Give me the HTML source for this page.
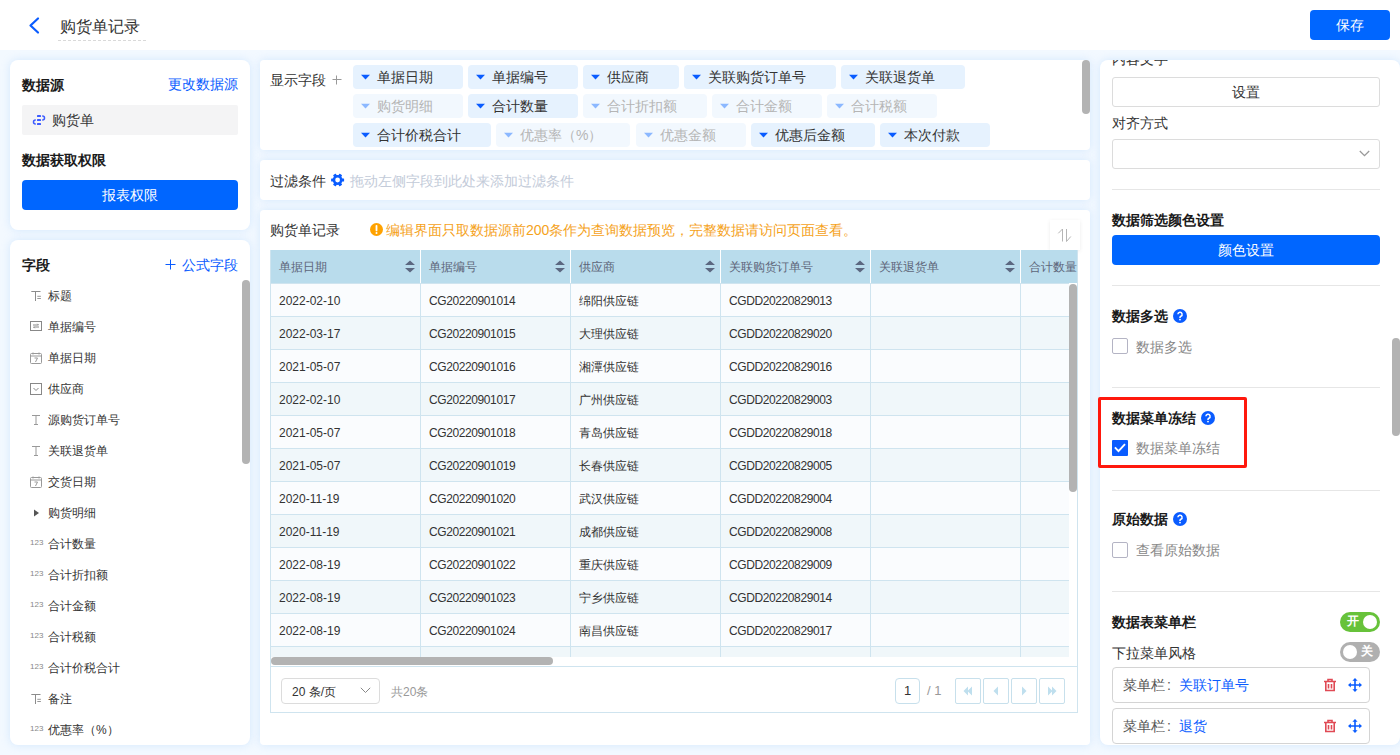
<!DOCTYPE html>
<html><head><meta charset="utf-8">
<style>
*{box-sizing:border-box;margin:0;padding:0}
html,body{width:1400px;height:755px;overflow:hidden}
body{position:relative;font-family:"Liberation Sans",sans-serif;font-size:14px;color:#333;background:#f3f9ff}
.a{position:absolute;white-space:nowrap}
.card{position:absolute;background:#fff;border-radius:8px;box-shadow:0 0 8px rgba(200,225,252,.75)}
.t14{font-size:14px;line-height:20px;height:20px}
.b{font-weight:bold;color:#1a1a1a}
.blue{color:#0a5cff}
.sb{position:absolute;background:#b3b3b3;border-radius:4px;width:8px}
</style></head><body>
<!-- HEADER -->
<div class="a" style="left:0;top:0;width:1400px;height:50px;background:#fff"></div>
<svg class="a" style="left:27px;top:16px" width="14" height="19" viewBox="0 0 14 19"><path d="M11 2.5 L3.5 9.5 L11 16.5" fill="none" stroke="#0a5cff" stroke-width="2.2" stroke-linecap="round" stroke-linejoin="round"/></svg>
<div class="a" style="left:60px;top:16px;font-size:16px;line-height:22px;color:#333">购货单记录</div>
<div class="a" style="left:58px;top:40px;width:88px;height:0;border-top:1px dashed #d9d9d9"></div>
<div class="a" style="left:1310px;top:10px;width:80px;height:30px;background:#0066ff;border-radius:4px;color:#fff;text-align:center;line-height:30px;font-size:14px">保存</div>

<!-- LEFT CARD 1 -->
<div class="card" style="left:10px;top:60px;width:240px;height:170px"></div>
<div class="a b" style="left:22px;top:75px;font-size:14px;line-height:20px">数据源</div>
<div class="a blue" style="left:168px;top:74px;font-size:14px;line-height:20px">更改数据源</div>
<div class="a" style="left:22px;top:105px;width:216px;height:30px;background:#f4f4f5;border-radius:2px"></div>
<svg class="a" style="left:32px;top:113px" width="14" height="14" viewBox="0 0 14 14"><g fill="#3d5cff"><rect x="5" y="2" width="4" height="2" rx=".6"/><rect x="5" y="6" width="4" height="2" rx=".6"/><rect x="5" y="10" width="4" height="2" rx=".6"/></g><g fill="none" stroke="#3d5cff" stroke-width="1.5"><path d="M10.2 3h.3a2 2 0 0 1 0 4h-.3"/><path d="M3.8 7h-.3a2 2 0 0 0 0 4h.3"/></g></svg>
<div class="a" style="left:52px;top:110px;font-size:14px;line-height:20px;color:#333">购货单</div>
<div class="a b" style="left:22px;top:150px;font-size:14px;line-height:20px">数据获取权限</div>
<div class="a" style="left:22px;top:180px;width:216px;height:30px;background:#0066ff;border-radius:4px;color:#fff;text-align:center;line-height:30px;font-size:14px">报表权限</div>

<!-- LEFT CARD 2 -->
<div class="card" style="left:10px;top:240px;width:240px;height:505px"></div>
<div class="a b" style="left:22px;top:255px;font-size:14px;line-height:20px">字段</div>
<svg class="a" style="left:165px;top:259px" width="11" height="11" viewBox="0 0 11 11"><path d="M5.5 0.5v10M0.5 5.5h10" stroke="#0a5cff" stroke-width="1"/></svg>
<div class="a blue" style="left:182px;top:255px;font-size:14px;line-height:20px">公式字段</div>
<div class="sb" style="left:242px;top:280px;height:184px"></div>
<svg class="a" style="left:30px;top:290px" width="12" height="12" viewBox="0 0 12 12"><g stroke="#8c8c8c" stroke-width="1" fill="none"><path d="M1.3 1.5h9.2M5.5 1.5v9.5"/><path d="M7.3 6.3h3.6M7.3 8.5h3.6" stroke-width=".9"/></g></svg>
<div class="a" style="left:48px;top:287px;font-size:12px;line-height:18px;color:#333">标题</div>
<svg class="a" style="left:30px;top:321px" width="12" height="12" viewBox="0 0 12 12"><g stroke="#888" stroke-width="1" fill="none"><rect x="0.5" y="0.5" width="11" height="9"/><path d="M3 4h5.5l-1.2-1.2M9 6H3.5l1.2 1.2"/></g></svg>
<div class="a" style="left:48px;top:318px;font-size:12px;line-height:18px;color:#333">单据编号</div>
<svg class="a" style="left:30px;top:352px" width="12" height="12" viewBox="0 0 12 12"><g stroke="#999" stroke-width="1" fill="none"><rect x="0.5" y="1.5" width="11" height="10" rx="1"/><path d="M0.5 4h11M3 0.5v2M9 0.5v2M4.5 6h3l-2 4"/></g></svg>
<div class="a" style="left:48px;top:349px;font-size:12px;line-height:18px;color:#333">单据日期</div>
<svg class="a" style="left:30px;top:383px" width="12" height="12" viewBox="0 0 12 12"><g stroke="#888" stroke-width="1" fill="none"><rect x="0.5" y="0.5" width="11" height="11"/><path d="M3.5 5l2.5 2.5L8.5 5"/></g></svg>
<div class="a" style="left:48px;top:380px;font-size:12px;line-height:18px;color:#333">供应商</div>
<svg class="a" style="left:30px;top:414px" width="12" height="12" viewBox="0 0 12 12"><g stroke="#999" stroke-width="1" fill="none"><path d="M2 1.5h8M6 1.5v9M4 10.5h4"/></g></svg>
<div class="a" style="left:48px;top:411px;font-size:12px;line-height:18px;color:#333">源购货订单号</div>
<svg class="a" style="left:30px;top:445px" width="12" height="12" viewBox="0 0 12 12"><g stroke="#999" stroke-width="1" fill="none"><path d="M2 1.5h8M6 1.5v9M4 10.5h4"/></g></svg>
<div class="a" style="left:48px;top:442px;font-size:12px;line-height:18px;color:#333">关联退货单</div>
<svg class="a" style="left:30px;top:476px" width="12" height="12" viewBox="0 0 12 12"><g stroke="#999" stroke-width="1" fill="none"><rect x="0.5" y="1.5" width="11" height="10" rx="1"/><path d="M0.5 4h11M3 0.5v2M9 0.5v2M4.5 6h3l-2 4"/></g></svg>
<div class="a" style="left:48px;top:473px;font-size:12px;line-height:18px;color:#333">交货日期</div>
<svg class="a" style="left:30px;top:507px" width="12" height="12" viewBox="0 0 12 12"><path d="M4 2.5l5 3.5-5 3.5z" fill="#555"/></svg>
<div class="a" style="left:48px;top:504px;font-size:12px;line-height:18px;color:#333">购货明细</div>
<div class="a" style="left:30px;top:537px;font-size:8px;line-height:12px;color:#888;letter-spacing:0">123</div>
<div class="a" style="left:48px;top:535px;font-size:12px;line-height:18px;color:#333">合计数量</div>
<div class="a" style="left:30px;top:568px;font-size:8px;line-height:12px;color:#888;letter-spacing:0">123</div>
<div class="a" style="left:48px;top:566px;font-size:12px;line-height:18px;color:#333">合计折扣额</div>
<div class="a" style="left:30px;top:599px;font-size:8px;line-height:12px;color:#888;letter-spacing:0">123</div>
<div class="a" style="left:48px;top:597px;font-size:12px;line-height:18px;color:#333">合计金额</div>
<div class="a" style="left:30px;top:630px;font-size:8px;line-height:12px;color:#888;letter-spacing:0">123</div>
<div class="a" style="left:48px;top:628px;font-size:12px;line-height:18px;color:#333">合计税额</div>
<div class="a" style="left:30px;top:661px;font-size:8px;line-height:12px;color:#888;letter-spacing:0">123</div>
<div class="a" style="left:48px;top:659px;font-size:12px;line-height:18px;color:#333">合计价税合计</div>
<svg class="a" style="left:30px;top:693px" width="12" height="12" viewBox="0 0 12 12"><g stroke="#8c8c8c" stroke-width="1" fill="none"><path d="M1.3 1.5h9.2M5.5 1.5v9.5"/><path d="M7.3 6.3h3.6M7.3 8.5h3.6" stroke-width=".9"/></g></svg>
<div class="a" style="left:48px;top:690px;font-size:12px;line-height:18px;color:#333">备注</div>
<div class="a" style="left:30px;top:723px;font-size:8px;line-height:12px;color:#888;letter-spacing:0">123</div>
<div class="a" style="left:48px;top:721px;font-size:12px;line-height:18px;color:#333">优惠率（%）</div>

<!-- MIDDLE CARD 1 -->
<div class="card" style="left:260px;top:60px;width:830px;height:90px;border-radius:4px"></div>
<div class="a" style="left:270px;top:70px;font-size:14px;line-height:20px;color:#333">显示字段</div>
<svg class="a" style="left:332px;top:75px" width="10" height="10" viewBox="0 0 10 10"><path d="M4.5 0.5v9M0.5 4.5h9" stroke="#999" stroke-width="1"/></svg>
<div class="sb" style="left:1082px;top:60px;height:54px"></div>
<div class="a" style="left:353px;top:65px;width:110px;height:24px;background:#e6f2fe;border-radius:4px"></div><svg class="a" style="left:361px;top:74px" width="9" height="6" viewBox="0 0 9 6"><path d="M0 0.8H9L4.5 5.6z" fill="#0a5cff"/></svg><div class="a" style="left:377px;top:67px;font-size:14px;line-height:20px;color:#333">单据日期</div>
<div class="a" style="left:468px;top:65px;width:110px;height:24px;background:#e6f2fe;border-radius:4px"></div><svg class="a" style="left:476px;top:74px" width="9" height="6" viewBox="0 0 9 6"><path d="M0 0.8H9L4.5 5.6z" fill="#0a5cff"/></svg><div class="a" style="left:492px;top:67px;font-size:14px;line-height:20px;color:#333">单据编号</div>
<div class="a" style="left:583px;top:65px;width:96px;height:24px;background:#e6f2fe;border-radius:4px"></div><svg class="a" style="left:591px;top:74px" width="9" height="6" viewBox="0 0 9 6"><path d="M0 0.8H9L4.5 5.6z" fill="#0a5cff"/></svg><div class="a" style="left:607px;top:67px;font-size:14px;line-height:20px;color:#333">供应商</div>
<div class="a" style="left:684px;top:65px;width:152px;height:24px;background:#e6f2fe;border-radius:4px"></div><svg class="a" style="left:692px;top:74px" width="9" height="6" viewBox="0 0 9 6"><path d="M0 0.8H9L4.5 5.6z" fill="#0a5cff"/></svg><div class="a" style="left:708px;top:67px;font-size:14px;line-height:20px;color:#333">关联购货订单号</div>
<div class="a" style="left:841px;top:65px;width:124px;height:24px;background:#e6f2fe;border-radius:4px"></div><svg class="a" style="left:849px;top:74px" width="9" height="6" viewBox="0 0 9 6"><path d="M0 0.8H9L4.5 5.6z" fill="#0a5cff"/></svg><div class="a" style="left:865px;top:67px;font-size:14px;line-height:20px;color:#333">关联退货单</div>
<div class="a" style="left:353px;top:94px;width:110px;height:24px;background:#f2f8fe;border-radius:4px"></div><svg class="a" style="left:361px;top:103px" width="9" height="6" viewBox="0 0 9 6"><path d="M0 0.8H9L4.5 5.6z" fill="#8cb8ff"/></svg><div class="a" style="left:377px;top:96px;font-size:14px;line-height:20px;color:#b5b5b5">购货明细</div>
<div class="a" style="left:468px;top:94px;width:110px;height:24px;background:#e6f2fe;border-radius:4px"></div><svg class="a" style="left:476px;top:103px" width="9" height="6" viewBox="0 0 9 6"><path d="M0 0.8H9L4.5 5.6z" fill="#0a5cff"/></svg><div class="a" style="left:492px;top:96px;font-size:14px;line-height:20px;color:#333">合计数量</div>
<div class="a" style="left:583px;top:94px;width:124px;height:24px;background:#f2f8fe;border-radius:4px"></div><svg class="a" style="left:591px;top:103px" width="9" height="6" viewBox="0 0 9 6"><path d="M0 0.8H9L4.5 5.6z" fill="#8cb8ff"/></svg><div class="a" style="left:607px;top:96px;font-size:14px;line-height:20px;color:#b5b5b5">合计折扣额</div>
<div class="a" style="left:712px;top:94px;width:110px;height:24px;background:#f2f8fe;border-radius:4px"></div><svg class="a" style="left:720px;top:103px" width="9" height="6" viewBox="0 0 9 6"><path d="M0 0.8H9L4.5 5.6z" fill="#8cb8ff"/></svg><div class="a" style="left:736px;top:96px;font-size:14px;line-height:20px;color:#b5b5b5">合计金额</div>
<div class="a" style="left:827px;top:94px;width:110px;height:24px;background:#f2f8fe;border-radius:4px"></div><svg class="a" style="left:835px;top:103px" width="9" height="6" viewBox="0 0 9 6"><path d="M0 0.8H9L4.5 5.6z" fill="#8cb8ff"/></svg><div class="a" style="left:851px;top:96px;font-size:14px;line-height:20px;color:#b5b5b5">合计税额</div>
<div class="a" style="left:353px;top:123px;width:138px;height:24px;background:#e6f2fe;border-radius:4px"></div><svg class="a" style="left:361px;top:132px" width="9" height="6" viewBox="0 0 9 6"><path d="M0 0.8H9L4.5 5.6z" fill="#0a5cff"/></svg><div class="a" style="left:377px;top:125px;font-size:14px;line-height:20px;color:#333">合计价税合计</div>
<div class="a" style="left:496px;top:123px;width:134px;height:24px;background:#f2f8fe;border-radius:4px"></div><svg class="a" style="left:504px;top:132px" width="9" height="6" viewBox="0 0 9 6"><path d="M0 0.8H9L4.5 5.6z" fill="#8cb8ff"/></svg><div class="a" style="left:520px;top:125px;font-size:14px;line-height:20px;color:#b5b5b5">优惠率（%）</div>
<div class="a" style="left:636px;top:123px;width:110px;height:24px;background:#f2f8fe;border-radius:4px"></div><svg class="a" style="left:644px;top:132px" width="9" height="6" viewBox="0 0 9 6"><path d="M0 0.8H9L4.5 5.6z" fill="#8cb8ff"/></svg><div class="a" style="left:660px;top:125px;font-size:14px;line-height:20px;color:#b5b5b5">优惠金额</div>
<div class="a" style="left:751px;top:123px;width:124px;height:24px;background:#e6f2fe;border-radius:4px"></div><svg class="a" style="left:759px;top:132px" width="9" height="6" viewBox="0 0 9 6"><path d="M0 0.8H9L4.5 5.6z" fill="#0a5cff"/></svg><div class="a" style="left:775px;top:125px;font-size:14px;line-height:20px;color:#333">优惠后金额</div>
<div class="a" style="left:880px;top:123px;width:110px;height:24px;background:#e6f2fe;border-radius:4px"></div><svg class="a" style="left:888px;top:132px" width="9" height="6" viewBox="0 0 9 6"><path d="M0 0.8H9L4.5 5.6z" fill="#0a5cff"/></svg><div class="a" style="left:904px;top:125px;font-size:14px;line-height:20px;color:#333">本次付款</div>

<!-- MIDDLE CARD 2 -->
<div class="card" style="left:260px;top:160px;width:830px;height:40px;border-radius:4px"></div>
<div class="a" style="left:270px;top:171px;font-size:14px;line-height:20px;color:#333">过滤条件</div>
<svg class="a" style="left:331px;top:173px" width="14" height="14" viewBox="0 0 14 14"><g fill="#0a5cff" transform="translate(6.6 7)"><circle r="4.9"/><rect x="-6.5" y="-1.6" width="13" height="3.2" rx=".5"/><rect x="-6.5" y="-1.6" width="13" height="3.2" rx=".5" transform="rotate(60)"/><rect x="-6.5" y="-1.6" width="13" height="3.2" rx=".5" transform="rotate(120)"/></g><circle cx="6.6" cy="7" r="2.4" fill="#fff"/></svg>
<div class="a" style="left:350px;top:171px;font-size:14px;line-height:20px;color:#c3cbd9">拖动左侧字段到此处来添加过滤条件</div>

<!-- MIDDLE CARD 3 -->
<div class="card" style="left:260px;top:210px;width:830px;height:535px;border-radius:4px"></div>
<div class="a" style="left:270px;top:220px;font-size:14px;line-height:20px;color:#333">购货单记录</div>
<svg class="a" style="left:370px;top:223px" width="13" height="13" viewBox="0 0 13 13"><circle cx="6.5" cy="6.5" r="6.5" fill="#ffa200"/><path d="M6.5 2.8v4.6" stroke="#fff" stroke-width="1.8" stroke-linecap="round"/><circle cx="6.5" cy="9.9" r="1" fill="#fff"/></svg>
<div class="a" style="left:386px;top:220px;font-size:14px;line-height:20px;color:#f5a21b">编辑界面只取数据源前200条作为查询数据预览，完整数据请访问页面查看。</div>
<div class="a" style="left:1050px;top:220px;width:30px;height:30px;background:#fff;box-shadow:0 1px 4px rgba(0,0,0,.08)"></div>
<svg class="a" style="left:1057px;top:228px" width="16" height="16" viewBox="0 0 16 16"><g fill="none" stroke="#b5b5b5" stroke-width="1"><path d="M5.5 13.5V1L1.3 5.3"/><path d="M9.5 1v12.5L13.8 8.5"/></g></svg>
<!-- TABLE -->
<div class="a" style="left:270px;top:250px;width:807px;height:33px;background:#b9dcec"></div>
<div class="a" style="left:279px;top:258px;font-size:12px;line-height:18px;color:#5d6579">单据日期</div><svg class="a" style="left:405px;top:260px" width="10" height="13" viewBox="0 0 10 13"><path d="M5 0.4L10 5H0z M0 8H10L5 12.4z" fill="#5c6880"/></svg>
<div class="a" style="left:420px;top:250px;width:1px;height:33px;background:#fff"></div><div class="a" style="left:429px;top:258px;font-size:12px;line-height:18px;color:#5d6579">单据编号</div><svg class="a" style="left:555px;top:260px" width="10" height="13" viewBox="0 0 10 13"><path d="M5 0.4L10 5H0z M0 8H10L5 12.4z" fill="#5c6880"/></svg>
<div class="a" style="left:570px;top:250px;width:1px;height:33px;background:#fff"></div><div class="a" style="left:579px;top:258px;font-size:12px;line-height:18px;color:#5d6579">供应商</div><svg class="a" style="left:705px;top:260px" width="10" height="13" viewBox="0 0 10 13"><path d="M5 0.4L10 5H0z M0 8H10L5 12.4z" fill="#5c6880"/></svg>
<div class="a" style="left:720px;top:250px;width:1px;height:33px;background:#fff"></div><div class="a" style="left:729px;top:258px;font-size:12px;line-height:18px;color:#5d6579">关联购货订单号</div><svg class="a" style="left:855px;top:260px" width="10" height="13" viewBox="0 0 10 13"><path d="M5 0.4L10 5H0z M0 8H10L5 12.4z" fill="#5c6880"/></svg>
<div class="a" style="left:870px;top:250px;width:1px;height:33px;background:#fff"></div><div class="a" style="left:879px;top:258px;font-size:12px;line-height:18px;color:#5d6579">关联退货单</div><svg class="a" style="left:1005px;top:260px" width="10" height="13" viewBox="0 0 10 13"><path d="M5 0.4L10 5H0z M0 8H10L5 12.4z" fill="#5c6880"/></svg>
<div class="a" style="left:1020px;top:250px;width:1px;height:33px;background:#fff"></div><div class="a" style="left:1029px;top:258px;font-size:12px;line-height:18px;color:#5d6579">合计数量</div>
<div class="a" style="left:270px;top:283px;width:799px;height:374px;overflow:hidden">
<div class="a" style="left:0;top:0px;width:799px;height:33px;background:#fafcfe;border-top:1px solid #cfe4ef"></div><div class="a" style="left:9px;top:9px;font-size:12px;line-height:18px;color:#333">2022-02-10</div><div class="a" style="left:159px;top:9px;font-size:12px;line-height:18px;color:#333;letter-spacing:-0.4px">CG20220901014</div><div class="a" style="left:309px;top:9px;font-size:12px;line-height:18px;color:#333">绵阳供应链</div><div class="a" style="left:459px;top:9px;font-size:12px;line-height:18px;color:#333;letter-spacing:-0.4px">CGDD20220829013</div>
<div class="a" style="left:0;top:33px;width:799px;height:33px;background:#f0f7fa;border-top:1px solid #cfe4ef"></div><div class="a" style="left:9px;top:42px;font-size:12px;line-height:18px;color:#333">2022-03-17</div><div class="a" style="left:159px;top:42px;font-size:12px;line-height:18px;color:#333;letter-spacing:-0.4px">CG20220901015</div><div class="a" style="left:309px;top:42px;font-size:12px;line-height:18px;color:#333">大理供应链</div><div class="a" style="left:459px;top:42px;font-size:12px;line-height:18px;color:#333;letter-spacing:-0.4px">CGDD20220829020</div>
<div class="a" style="left:0;top:66px;width:799px;height:33px;background:#fafcfe;border-top:1px solid #cfe4ef"></div><div class="a" style="left:9px;top:75px;font-size:12px;line-height:18px;color:#333">2021-05-07</div><div class="a" style="left:159px;top:75px;font-size:12px;line-height:18px;color:#333;letter-spacing:-0.4px">CG20220901016</div><div class="a" style="left:309px;top:75px;font-size:12px;line-height:18px;color:#333">湘潭供应链</div><div class="a" style="left:459px;top:75px;font-size:12px;line-height:18px;color:#333;letter-spacing:-0.4px">CGDD20220829016</div>
<div class="a" style="left:0;top:99px;width:799px;height:33px;background:#f0f7fa;border-top:1px solid #cfe4ef"></div><div class="a" style="left:9px;top:108px;font-size:12px;line-height:18px;color:#333">2022-02-10</div><div class="a" style="left:159px;top:108px;font-size:12px;line-height:18px;color:#333;letter-spacing:-0.4px">CG20220901017</div><div class="a" style="left:309px;top:108px;font-size:12px;line-height:18px;color:#333">广州供应链</div><div class="a" style="left:459px;top:108px;font-size:12px;line-height:18px;color:#333;letter-spacing:-0.4px">CGDD20220829003</div>
<div class="a" style="left:0;top:132px;width:799px;height:33px;background:#fafcfe;border-top:1px solid #cfe4ef"></div><div class="a" style="left:9px;top:141px;font-size:12px;line-height:18px;color:#333">2021-05-07</div><div class="a" style="left:159px;top:141px;font-size:12px;line-height:18px;color:#333;letter-spacing:-0.4px">CG20220901018</div><div class="a" style="left:309px;top:141px;font-size:12px;line-height:18px;color:#333">青岛供应链</div><div class="a" style="left:459px;top:141px;font-size:12px;line-height:18px;color:#333;letter-spacing:-0.4px">CGDD20220829018</div>
<div class="a" style="left:0;top:165px;width:799px;height:33px;background:#f0f7fa;border-top:1px solid #cfe4ef"></div><div class="a" style="left:9px;top:174px;font-size:12px;line-height:18px;color:#333">2021-05-07</div><div class="a" style="left:159px;top:174px;font-size:12px;line-height:18px;color:#333;letter-spacing:-0.4px">CG20220901019</div><div class="a" style="left:309px;top:174px;font-size:12px;line-height:18px;color:#333">长春供应链</div><div class="a" style="left:459px;top:174px;font-size:12px;line-height:18px;color:#333;letter-spacing:-0.4px">CGDD20220829005</div>
<div class="a" style="left:0;top:198px;width:799px;height:33px;background:#fafcfe;border-top:1px solid #cfe4ef"></div><div class="a" style="left:9px;top:207px;font-size:12px;line-height:18px;color:#333">2020-11-19</div><div class="a" style="left:159px;top:207px;font-size:12px;line-height:18px;color:#333;letter-spacing:-0.4px">CG20220901020</div><div class="a" style="left:309px;top:207px;font-size:12px;line-height:18px;color:#333">武汉供应链</div><div class="a" style="left:459px;top:207px;font-size:12px;line-height:18px;color:#333;letter-spacing:-0.4px">CGDD20220829004</div>
<div class="a" style="left:0;top:231px;width:799px;height:33px;background:#f0f7fa;border-top:1px solid #cfe4ef"></div><div class="a" style="left:9px;top:240px;font-size:12px;line-height:18px;color:#333">2020-11-19</div><div class="a" style="left:159px;top:240px;font-size:12px;line-height:18px;color:#333;letter-spacing:-0.4px">CG20220901021</div><div class="a" style="left:309px;top:240px;font-size:12px;line-height:18px;color:#333">成都供应链</div><div class="a" style="left:459px;top:240px;font-size:12px;line-height:18px;color:#333;letter-spacing:-0.4px">CGDD20220829008</div>
<div class="a" style="left:0;top:264px;width:799px;height:33px;background:#fafcfe;border-top:1px solid #cfe4ef"></div><div class="a" style="left:9px;top:273px;font-size:12px;line-height:18px;color:#333">2022-08-19</div><div class="a" style="left:159px;top:273px;font-size:12px;line-height:18px;color:#333;letter-spacing:-0.4px">CG20220901022</div><div class="a" style="left:309px;top:273px;font-size:12px;line-height:18px;color:#333">重庆供应链</div><div class="a" style="left:459px;top:273px;font-size:12px;line-height:18px;color:#333;letter-spacing:-0.4px">CGDD20220829009</div>
<div class="a" style="left:0;top:297px;width:799px;height:33px;background:#f0f7fa;border-top:1px solid #cfe4ef"></div><div class="a" style="left:9px;top:306px;font-size:12px;line-height:18px;color:#333">2022-08-19</div><div class="a" style="left:159px;top:306px;font-size:12px;line-height:18px;color:#333;letter-spacing:-0.4px">CG20220901023</div><div class="a" style="left:309px;top:306px;font-size:12px;line-height:18px;color:#333">宁乡供应链</div><div class="a" style="left:459px;top:306px;font-size:12px;line-height:18px;color:#333;letter-spacing:-0.4px">CGDD20220829014</div>
<div class="a" style="left:0;top:330px;width:799px;height:33px;background:#fafcfe;border-top:1px solid #cfe4ef"></div><div class="a" style="left:9px;top:339px;font-size:12px;line-height:18px;color:#333">2022-08-19</div><div class="a" style="left:159px;top:339px;font-size:12px;line-height:18px;color:#333;letter-spacing:-0.4px">CG20220901024</div><div class="a" style="left:309px;top:339px;font-size:12px;line-height:18px;color:#333">南昌供应链</div><div class="a" style="left:459px;top:339px;font-size:12px;line-height:18px;color:#333;letter-spacing:-0.4px">CGDD20220829017</div>
<div class="a" style="left:0;top:363px;width:799px;height:33px;background:#f0f7fa;border-top:1px solid #cfe4ef"></div>
<div class="a" style="left:150px;top:0;width:1px;height:374px;background:#cfe4ef"></div><div class="a" style="left:300px;top:0;width:1px;height:374px;background:#cfe4ef"></div><div class="a" style="left:450px;top:0;width:1px;height:374px;background:#cfe4ef"></div><div class="a" style="left:600px;top:0;width:1px;height:374px;background:#cfe4ef"></div><div class="a" style="left:750px;top:0;width:1px;height:374px;background:#cfe4ef"></div></div>
<div class="a" style="left:270px;top:250px;width:1px;height:463px;background:#cfe4ef"></div><div class="a" style="left:1077px;top:250px;width:1px;height:463px;background:#cfe4ef"></div><div class="sb" style="left:1069px;top:284px;height:208px"></div><div class="a" style="left:271px;top:657px;width:806px;height:9px;background:#fff"></div><div class="a" style="left:271px;top:657px;width:282px;height:8px;background:#b3b3b3;border-radius:4px"></div><div class="a" style="left:270px;top:666px;width:808px;height:47px;border:1px solid #cfe4ef;background:#fff"></div>
<div class="a" style="left:281px;top:678px;width:99px;height:26px;border:1px solid #dcdcdc;border-radius:4px;background:#fff"></div>
<div class="a" style="left:292px;top:683px;font-size:12px;line-height:18px;color:#333">20 条/页</div>
<svg class="a" style="left:360px;top:687px" width="11" height="7" viewBox="0 0 11 7"><path d="M0.8 0.8L5.5 5.5L10.2 0.8" fill="none" stroke="#888" stroke-width="1"/></svg>
<div class="a" style="left:391px;top:683px;font-size:12px;line-height:18px;color:#999">共20条</div>
<div class="a" style="left:895px;top:678px;width:25px;height:26px;border:1px solid #c7e0ec;border-radius:4px;background:#fff;text-align:center;line-height:24px;font-size:13px;color:#333">1</div>
<div class="a" style="left:927px;top:682px;font-size:13px;line-height:18px;color:#999">/ 1</div>
<div class="a" style="left:955px;top:678px;width:26px;height:26px;border:1px solid #c7e0ec;border-radius:2px;background:#fff"></div><svg class="a" style="left:962px;top:685px" width="12" height="12" viewBox="0 0 12 12"><path d="M1.5 6l4.5-4.5v9z M5.5 6l4.5-4.5v9z" fill="#bfdfee"/></svg>
<div class="a" style="left:983px;top:678px;width:26px;height:26px;border:1px solid #c7e0ec;border-radius:2px;background:#fff"></div><svg class="a" style="left:990px;top:685px" width="12" height="12" viewBox="0 0 12 12"><path d="M3.5 6l4.5-4.5v9z" fill="#bfdfee"/></svg>
<div class="a" style="left:1011px;top:678px;width:26px;height:26px;border:1px solid #c7e0ec;border-radius:2px;background:#fff"></div><svg class="a" style="left:1018px;top:685px" width="12" height="12" viewBox="0 0 12 12"><path d="M8.5 6L4 1.5v9z" fill="#bfdfee"/></svg>
<div class="a" style="left:1039px;top:678px;width:26px;height:26px;border:1px solid #c7e0ec;border-radius:2px;background:#fff"></div><svg class="a" style="left:1046px;top:685px" width="12" height="12" viewBox="0 0 12 12"><path d="M10.5 6L6 1.5v9z M6.5 6L2 1.5v9z" fill="#bfdfee"/></svg>

<!-- RIGHT PANEL -->
<div class="card" style="left:1100px;top:60px;width:300px;height:685px"></div>
<div class="a" style="left:1100px;top:60px;width:300px;height:685px;overflow:hidden;border-radius:8px">
 <div class="a" style="left:12px;top:-11px;font-size:14px;line-height:20px;color:#333">内容文字</div>
</div>
<div class="a" style="left:1112px;top:77px;width:268px;height:30px;border:1px solid #dcdcdc;border-radius:3px;text-align:center;line-height:28px;font-size:14px;color:#333">设置</div>
<div class="a" style="left:1112px;top:113px;font-size:14px;line-height:20px;color:#333">对齐方式</div>
<div class="a" style="left:1112px;top:139px;width:268px;height:30px;border:1px solid #dcdcdc;border-radius:3px"></div>
<svg class="a" style="left:1359px;top:150px" width="11" height="7" viewBox="0 0 11 7"><path d="M0.8 1L5.5 5.7L10.2 1" fill="none" stroke="#999" stroke-width="1.3"/></svg>
<div class="a" style="left:1112px;top:189px;width:268px;height:1px;background:#e6e6e6"></div>
<div class="a b" style="left:1112px;top:210px;font-size:14px;line-height:20px">数据筛选颜色设置</div>
<div class="a" style="left:1112px;top:235px;width:268px;height:30px;background:#0066ff;border-radius:4px;color:#fff;text-align:center;line-height:30px;font-size:14px">颜色设置</div>
<div class="a" style="left:1112px;top:285px;width:268px;height:1px;background:#e6e6e6"></div>
<div class="a b" style="left:1112px;top:306px;font-size:14px;line-height:20px">数据多选</div>
<svg class="a" style="left:1173px;top:309px" width="14" height="14" viewBox="0 0 14 14"><circle cx="7" cy="7" r="7" fill="#0a5cff"/><path d="M4.9 5.3a2.1 2.1 0 1 1 3 1.9c-.6.3-.9.7-.9 1.3v.4" fill="none" stroke="#fff" stroke-width="1.5"/><circle cx="7" cy="10.6" r=".9" fill="#fff"/></svg>
<div class="a" style="left:1112px;top:338px;width:16px;height:16px;border:1px solid #b4b4c4;border-radius:2px;background:#fff"></div>
<div class="a" style="left:1136px;top:337px;font-size:14px;line-height:20px;color:#888">数据多选</div>
<div class="a" style="left:1112px;top:387px;width:268px;height:1px;background:#e6e6e6"></div>
<div class="a" style="left:1098px;top:397px;width:149px;height:71px;border:3px solid #ff180d;border-radius:2px"></div>
<div class="a b" style="left:1112px;top:408px;font-size:14px;line-height:20px">数据菜单冻结</div>
<svg class="a" style="left:1201px;top:411px" width="14" height="14" viewBox="0 0 14 14"><circle cx="7" cy="7" r="7" fill="#0a5cff"/><path d="M4.9 5.3a2.1 2.1 0 1 1 3 1.9c-.6.3-.9.7-.9 1.3v.4" fill="none" stroke="#fff" stroke-width="1.5"/><circle cx="7" cy="10.6" r=".9" fill="#fff"/></svg>
<div class="a" style="left:1112px;top:440px;width:16px;height:16px;background:#0a5cff;border-radius:1px"></div>
<svg class="a" style="left:1112px;top:440px" width="16" height="16" viewBox="0 0 16 16"><path d="M2.9 7.3L6.5 11.1L13 4.2" fill="none" stroke="#fff" stroke-width="1.9"/></svg>
<div class="a" style="left:1136px;top:438px;font-size:14px;line-height:20px;color:#888">数据菜单冻结</div>
<div class="a" style="left:1112px;top:490px;width:268px;height:1px;background:#e6e6e6"></div>
<div class="a b" style="left:1112px;top:509px;font-size:14px;line-height:20px">原始数据</div>
<svg class="a" style="left:1173px;top:512px" width="14" height="14" viewBox="0 0 14 14"><circle cx="7" cy="7" r="7" fill="#0a5cff"/><path d="M4.9 5.3a2.1 2.1 0 1 1 3 1.9c-.6.3-.9.7-.9 1.3v.4" fill="none" stroke="#fff" stroke-width="1.5"/><circle cx="7" cy="10.6" r=".9" fill="#fff"/></svg>
<div class="a" style="left:1112px;top:542px;width:16px;height:16px;border:1px solid #b4b4c4;border-radius:2px;background:#fff"></div>
<div class="a" style="left:1136px;top:540px;font-size:14px;line-height:20px;color:#888">查看原始数据</div>
<div class="a" style="left:1112px;top:591px;width:268px;height:1px;background:#e6e6e6"></div>
<div class="a b" style="left:1112px;top:612px;font-size:14px;line-height:20px">数据表菜单栏</div>
<div class="a" style="left:1340px;top:612px;width:40px;height:20px;border-radius:10px;background:#67c23a"></div>
<div class="a" style="left:1347px;top:611px;font-size:12px;line-height:20px;color:#fff;font-weight:bold">开</div>
<div class="a" style="left:1363px;top:615px;width:14px;height:14px;border-radius:7px;background:#fff"></div>
<div class="a" style="left:1112px;top:643px;font-size:14px;line-height:20px;color:#333">下拉菜单风格</div>
<div class="a" style="left:1340px;top:642px;width:40px;height:20px;border-radius:10px;background:#b0b0b0"></div>
<div class="a" style="left:1343px;top:645px;width:14px;height:14px;border-radius:7px;background:#fff"></div>
<div class="a" style="left:1361px;top:641px;font-size:12px;line-height:20px;color:#fff;font-weight:bold">关</div>
<div class="a" style="left:1112px;top:667px;width:258px;height:36px;border:1px solid #d4d4d4;border-radius:4px;background:#fff"></div><div class="a" style="left:1123px;top:675px;font-size:14px;line-height:20px;color:#555">菜单栏<span style="display:inline-block;width:14px;padding-left:2px">:</span><span style="color:#0a5cff">关联订单号</span></div><svg class="a" style="left:1323px;top:678px" width="14" height="14" viewBox="0 0 14 14"><g fill="none" stroke="#e04a55" stroke-width="1.6"><path d="M1 3.5h12M5 3.5V1.5h4v2"/><path d="M2.8 3.5v9h8.4v-9M5.5 6v4.5M8.5 6v4.5"/></g></svg><svg class="a" style="left:1348px;top:678px" width="14" height="14" viewBox="0 0 14 14"><g fill="#0a5cff"><path d="M7 0l2.6 2.8H4.4zM7 14l-2.6-2.8h5.2zM0 7l2.8-2.6v5.2zM14 7l-2.8 2.6V4.4z"/><path d="M6.2 2h1.6v10H6.2zM2 6.2h10v1.6H2z"/></g></svg>
<div class="a" style="left:1112px;top:708px;width:258px;height:36px;border:1px solid #d4d4d4;border-radius:4px;background:#fff"></div><div class="a" style="left:1123px;top:716px;font-size:14px;line-height:20px;color:#555">菜单栏<span style="display:inline-block;width:14px;padding-left:2px">:</span><span style="color:#0a5cff">退货</span></div><svg class="a" style="left:1323px;top:719px" width="14" height="14" viewBox="0 0 14 14"><g fill="none" stroke="#e04a55" stroke-width="1.6"><path d="M1 3.5h12M5 3.5V1.5h4v2"/><path d="M2.8 3.5v9h8.4v-9M5.5 6v4.5M8.5 6v4.5"/></g></svg><svg class="a" style="left:1348px;top:719px" width="14" height="14" viewBox="0 0 14 14"><g fill="#0a5cff"><path d="M7 0l2.6 2.8H4.4zM7 14l-2.6-2.8h5.2zM0 7l2.8-2.6v5.2zM14 7l-2.8 2.6V4.4z"/><path d="M6.2 2h1.6v10H6.2zM2 6.2h10v1.6H2z"/></g></svg>
<div class="sb" style="left:1392px;top:338px;height:98px"></div>
</body></html>
